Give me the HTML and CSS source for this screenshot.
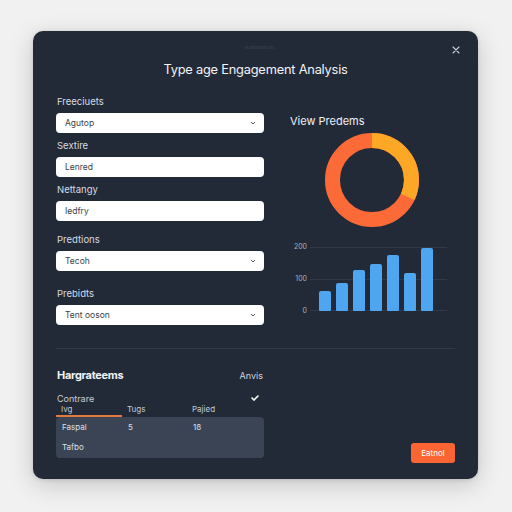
FILE: index.html
```html
<!DOCTYPE html>
<html>
<head>
<meta charset="utf-8">
<link rel="stylesheet" href="styles.css">
</head>
<body>
<div class="modal">
  <button class="close" aria-label="close">
    <svg width="8" height="8" viewBox="0 0 8 8"><path d="M1 1L7 7M7 1L1 7" stroke="#c9ced6" stroke-width="1.1" stroke-linecap="round"/></svg>
  </button>
  <div class="tag">ss mmnnnn nnn</div>
  <h1 class="title">Type age Engagement Analysis</h1>

  <div class="main">
    <div class="form">
      <label class="label">Freeciuets</label>
      <div class="field select">
        <span>Agutop</span>
        <svg class="chev" width="6" height="4" viewBox="0 0 6 4"><path d="M1 1L3 3L5 1" stroke="#555" stroke-width="1" fill="none"/></svg>
      </div>
      <label class="label gap-s">Sextire</label>
      <div class="field"><span>Lenred</span></div>
      <label class="label gap-s">Nettangy</label>
      <div class="field"><span>Iedfry</span></div>
      <label class="label gap-m">Predtions</label>
      <div class="field select">
        <span>Tecoh</span>
        <svg class="chev" width="6" height="4" viewBox="0 0 6 4"><path d="M1 1L3 3L5 1" stroke="#555" stroke-width="1" fill="none"/></svg>
      </div>
      <label class="label gap-l">Prebidts</label>
      <div class="field select">
        <span>Tent ooson</span>
        <svg class="chev" width="6" height="4" viewBox="0 0 6 4"><path d="M1 1L3 3L5 1" stroke="#555" stroke-width="1" fill="none"/></svg>
      </div>
    </div>

    <div class="viz">
      <div class="viz-title">View Predems</div>
      <svg class="donut" width="94" height="94" viewBox="0 0 94 94">
        <circle cx="47" cy="47" r="39.5" fill="none" stroke="#fb6a37" stroke-width="15"/>
        <circle cx="47" cy="47" r="39.5" fill="none" stroke="#fca726" stroke-width="15"
                stroke-dasharray="79.4 248.2" transform="rotate(-90 47 47)"/>
      </svg>
      <div class="chart">
        <div class="axis"><span>200</span><span>100</span><span>0</span></div>
        <div class="plot">
          <div class="bar" style="height:20px"></div>
          <div class="bar" style="height:28px"></div>
          <div class="bar" style="height:41px"></div>
          <div class="bar" style="height:47px"></div>
          <div class="bar" style="height:56px"></div>
          <div class="bar" style="height:38px"></div>
          <div class="bar" style="height:63px"></div>
        </div>
      </div>
    </div>
  </div>

  <div class="divider"></div>

  <div class="bottom">
    <div class="section">
      <div class="sec-head">
        <span class="sec-title">Hargrateems</span>
        <span class="sec-link">Anvis</span>
      </div>
      <div class="sec-sub">
        <span>Contrare</span>
        <svg width="8" height="6" viewBox="0 0 8 6"><path d="M1 3L3 5L7 1" stroke="#ffffff" stroke-width="1.6" fill="none" stroke-linecap="round"/></svg>
      </div>
      <div class="thead">
        <span class="th active">Ivg</span>
        <span class="th">Tugs</span>
        <span class="th">Pajied</span>
      </div>
      <div class="tbody">
        <div class="tr"><span>Faspal</span><span>5</span><span>18</span></div>
        <div class="tr"><span>Tafbo</span><span></span><span></span></div>
      </div>
    </div>
    <div class="actions">
      <button class="btn">Eatnol</button>
    </div>
  </div>
</div>
</body>
</html>
```

FILE: styles.css
```css
* { box-sizing: border-box; }

body {
  margin: 0;
  width: 512px;
  height: 512px;
  background: #f1f1f2;
  font-family: Inter, "Liberation Sans", sans-serif;
  overflow: hidden;
}

.modal {
  position: relative;
  margin: 31px 0 0 33px;
  width: 445px;
  height: 448px;
  background: #222a38;
  border-radius: 10px;
  box-shadow: 0 6px 24px rgba(0,0,0,0.18), 0 1px 4px rgba(0,0,0,0.12);
  padding: 14px 23px 16px 23px;
  display: flex;
  flex-direction: column;
  color: #e4e7ec;
}

.close {
  position: absolute;
  top: 14px;
  right: 17px;
  width: 10px;
  height: 10px;
  padding: 0;
  border: 0;
  background: none;
  display: flex;
  align-items: center;
  justify-content: center;
}

.tag {
  height: 6px;
  font-size: 4px;
  line-height: 6px;
  text-align: center;
  color: #3c4759;
  padding-left: 8px;
}

.title {
  margin: 9px 0 0 0;
  font-size: 12.8px;
  line-height: 20px;
  font-weight: 400;
  text-align: center;
  color: #f2f4f7;
  letter-spacing: -0.2px;
}

.main {
  margin-top: 16px;
  display: grid;
  grid-template-columns: 208px 1fr;
  column-gap: 26px;
}

.form {
  display: flex;
  flex-direction: column;
}

.label {
  font-size: 9.5px;
  line-height: 12px;
  color: #d6dbe3;
  margin-bottom: 5px;
  padding-left: 1px;
}
.gap-s { margin-top: 7px; }
.gap-m { margin-top: 13px; }
.gap-l { margin-top: 17px; }

.field {
  height: 20px;
  background: #ffffff;
  border-radius: 4px;
  padding: 0 8px 0 9px;
  display: flex;
  align-items: center;
  justify-content: space-between;
  font-size: 8.5px;
  color: #3a3f48;
}

.chev { flex: none; }

.viz {
  display: flex;
  flex-direction: column;
}

.viz-title {
  margin-top: 18px;
  font-size: 11px;
  line-height: 14px;
  color: #eef1f5;
  font-weight: 400;
}

.donut {
  margin: 5px 0 0 35px;
  display: block;
}

.chart {
  margin-top: 15px;
  display: flex;
  height: 74px;
}

.axis {
  width: 20px;
  display: flex;
  flex-direction: column;
  justify-content: space-between;
  align-items: flex-end;
  padding-right: 9px;
  font-size: 7px;
  line-height: 10px;
  color: #a8b0bc;
}
.axis span { width: 14px; text-align: right; margin-right: -6px; }

.plot {
  flex: 1;
  margin: 5px 8px 5px 0;
  height: 64px;
  display: flex;
  align-items: flex-end;
  gap: 5px;
  padding-left: 9px;
  background:
    linear-gradient(#2f3947, #2f3947) top / 100% 1px no-repeat,
    linear-gradient(#2f3947, #2f3947) center / 100% 1px no-repeat,
    linear-gradient(#2f3947, #2f3947) bottom / 100% 1px no-repeat;
}

.bar {
  width: 12px;
  background: #4ea5f0;
  border-radius: 2px 2px 1px 1px;
}

.divider {
  margin-top: 23px;
  height: 1px;
  background: #2f3948;
}

.bottom {
  flex: 1;
  display: grid;
  grid-template-columns: 208px 1fr;
  column-gap: 26px;
}

.section {
  padding-top: 19px;
  display: flex;
  flex-direction: column;
}

.sec-head {
  display: flex;
  justify-content: space-between;
  align-items: center;
  height: 14px;
  padding-left: 1px;
}
.sec-title {
  font-size: 11px;
  font-weight: 700;
  color: #f1f3f6;
  letter-spacing: -0.3px;
}
.sec-link {
  font-size: 9px;
  color: #d0d5dd;
  margin-right: 1px;
}

.sec-sub {
  margin-top: 10px;
  height: 12px;
  display: flex;
  justify-content: space-between;
  align-items: center;
  font-size: 9px;
  color: #c8ced7;
  padding: 0 5px 0 1px;
}

.thead {
  display: grid;
  grid-template-columns: 66px 65px 1fr;
  height: 13px;
  font-size: 8px;
  line-height: 10px;
  color: #c5cbd4;
}
.th { padding-left: 5px; }
.th.active { border-bottom: 2px solid #e27a3f; }

.tbody {
  background: #3a4454;
  border-radius: 4px;
  padding-bottom: 1px;
}
.tr {
  display: grid;
  grid-template-columns: 66px 65px 1fr;
  height: 20px;
  align-items: center;
  font-size: 8px;
  color: #dde1e7;
}
.tr span { padding-left: 6px; }

.actions {
  display: flex;
  align-items: flex-end;
  justify-content: flex-end;
}

.btn {
  width: 44px;
  height: 20px;
  border: 0;
  border-radius: 3px;
  background: #fb6533;
  color: #ffffff;
  font-family: Inter, "Liberation Sans", sans-serif;
  font-size: 8px;
  padding: 0;
}
```
